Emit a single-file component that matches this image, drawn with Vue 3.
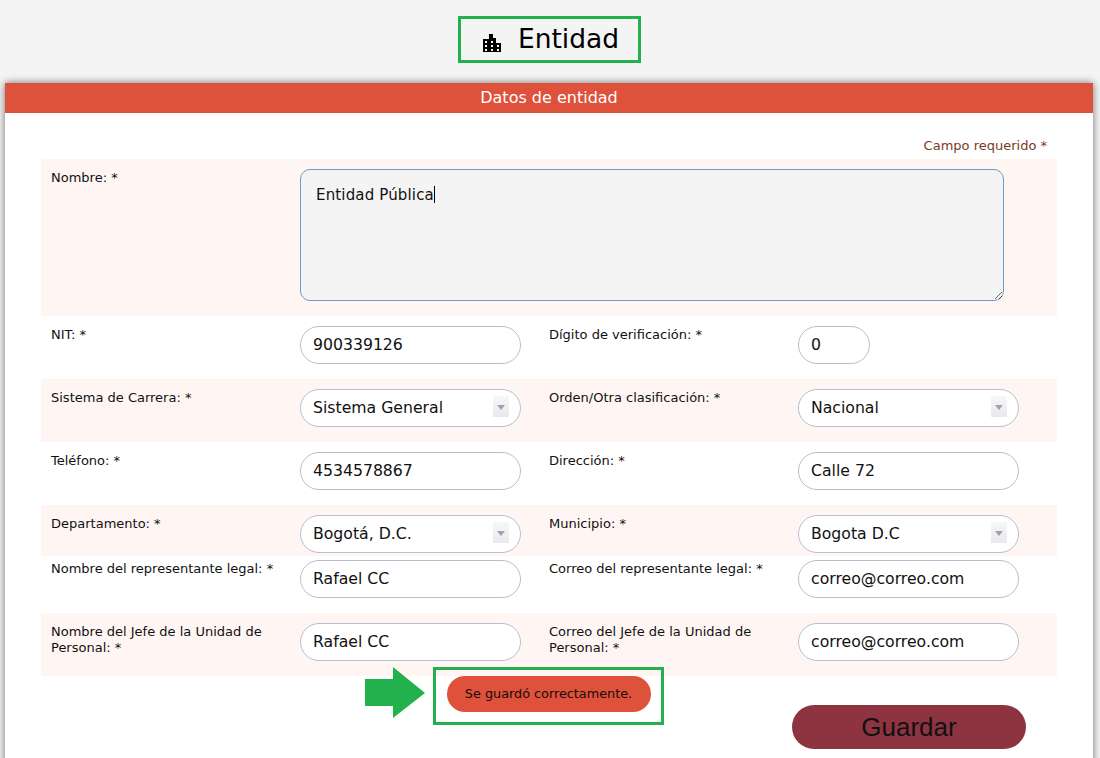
<script setup>
const formRows = [
  { cls: 'pink', left: { label: 'Sistema de Carrera: *', value: 'Sistema General', select: true }, right: { label: 'Orden/Otra clasificación: *', value: 'Nacional', select: true } },
  { cls: '', left: { label: 'Teléfono: *', value: '4534578867' }, right: { label: 'Dirección: *', value: 'Calle 72' } },
  { cls: 'pink short', left: { label: 'Departamento: *', value: 'Bogotá, D.C.', select: true }, right: { label: 'Municipio: *', value: 'Bogota D.C', select: true } },
  { cls: 'tight', left: { label: 'Nombre del representante legal: *', value: 'Rafael CC' }, right: { label: 'Correo del representante legal: *', value: 'correo@correo.com' } },
  { cls: 'pink', left: { label: 'Nombre del Jefe de la Unidad de Personal: *', value: 'Rafael CC' }, right: { label: 'Correo del Jefe de la Unidad de Personal: *', value: 'correo@correo.com' } }
]
</script>

<template>
  <div class="page">
    <header class="top">
      <h1 class="title">
        <svg class="icon" viewBox="0 0 18 18" width="18" height="18" shape-rendering="crispEdges">
          <path fill="#000" fill-rule="evenodd" d="M6 0h4v4h3v5h5v9H0V5h6zM2 7v2h2V7zM8 7v2h2V7zM2 11v2h2v-2zM8 11v2h2v-2zM14 11v2h2v-2zM2 15v2h2v-2zM8 15v2h2v-2zM14 15v2h2v-2z"/>
        </svg>
        <span>Entidad</span>
      </h1>
    </header>

    <section class="card">
      <div class="card-head">Datos de entidad</div>
      <div class="card-body">
        <p class="required">Campo requerido *</p>

        <div class="row pink name-row">
          <label class="label">Nombre: *</label>
          <div class="area-wrap">
            <textarea class="area">Entidad Pública</textarea>
            <span class="caret"></span>
          </div>
        </div>

        <div class="row">
          <label class="label">NIT: *</label>
          <input class="field" value="900339126" />
          <label class="label">Dígito de verificación: *</label>
          <input class="field tiny" value="0" />
        </div>

        <div v-for="row in formRows" :key="row.left.label" class="row" :class="row.cls">
          <template v-for="f in [row.left, row.right]" :key="f.label">
            <label class="label">{{ f.label }}</label>
            <div v-if="f.select" class="select-wrap">
              <input class="field" :value="f.value" />
              <span class="arrow"></span>
            </div>
            <input v-else class="field" :value="f.value" />
          </template>
        </div>

        <div class="footer">
          <div class="notice-area">
            <svg class="big-arrow" viewBox="0 0 60 51" width="60" height="51">
              <path fill="#22b14c" d="M0 12h28V0l32 26-32 25V39H0z"/>
            </svg>
            <div class="notice-frame">
              <div class="notice">Se guardó correctamente.</div>
            </div>
          </div>
          <button class="save" type="button">Guardar</button>
        </div>
      </div>
    </section>
  </div>
</template>

<style>
html, body { margin: 0; overflow: hidden; background: #f4f4f4; }
</style>

<style scoped>
.page {
  height: 758px;
  overflow: hidden;
  background: #f4f4f4;
  font-family: "DejaVu Sans", Verdana, sans-serif;
  color: #000;
}
.top { display: flex; justify-content: center; padding-top: 16px; height: 83px; box-sizing: border-box; }
.title {
  margin: 0 0 0 -2px;
  width: 183px;
  height: 47px;
  box-sizing: border-box;
  border: 3px solid #22b14c;
  padding-left: 4px;
  display: flex;
  align-items: center;
  justify-content: center;
  gap: 17px;
  font-size: 26.500px;
  line-height: 38px;
  font-weight: 400;
}
.title span { margin-top: -2px; }
.icon { margin-top: 6px; }
.card {
  margin: 0 7px 0 5px;
  background: #fff;
  box-shadow: 0 0 8px rgba(0, 0, 0, .55);
  height: 700px;
}
.card-head {
  height: 30px;
  line-height: 30px;
  background: #de513b;
  color: #fff;
  text-align: center;
  font-size: 16px;
}
.card-body { padding: 0 36px; }
.required {
  margin: 0;
  height: 46px;
  box-sizing: border-box;
  padding: 25px 10px 0 0;
  text-align: right;
  font-size: 13px;
  line-height: 16px;
  color: #7b3a22;
}
.row {
  display: grid;
  grid-template-columns: repeat(4, 249px);
  padding: 10px 10px 15px;
  align-items: start;
}
.pink { background: #fff6f4; }
.short { padding-bottom: 3px; }
.tight { padding-top: 4px; }
.name-row { grid-template-columns: 249px 1fr; }
.label {
  font-size: 13px;
  line-height: 16px;
  padding: 1px 12px 0 0;
  color: #111;
}
.area-wrap { position: relative; width: 704px; height: 132px; }
.area {
  display: block;
  width: 704px;
  height: 132px;
  box-sizing: border-box;
  border: 1px solid #6b9ac4;
  border-radius: 10px;
  background: #f4f4f4;
  padding: 16px 15px;
  font: 15px/18px "DejaVu Sans", Verdana, sans-serif;
  letter-spacing: .15px;
  color: #111;
  outline: none;
}
.caret {
  position: absolute;
  left: 134px;
  top: 17px;
  width: 1px;
  height: 17px;
  background: #000;
}
.field {
  display: block;
  width: 221px;
  height: 38px;
  box-sizing: border-box;
  border: 1px solid #b9bfd0;
  border-radius: 19px;
  background: #fff;
  padding: 0 12px 2px;
  font: 15.700px "DejaVu Sans", Verdana, sans-serif;
  color: #111;
  outline: none;
}
.tiny { width: 72px; }
.select-wrap { position: relative; width: 221px; }
.arrow {
  position: absolute;
  right: 12px;
  top: 7px;
  width: 16px;
  height: 21px;
  background: linear-gradient(#f7f7f8, #e9e9ec);
}
.arrow::after {
  content: "";
  position: absolute;
  left: 4px;
  top: 9px;
  border: 4px solid transparent;
  border-top: 5px solid #9aa3b8;
  border-bottom: 0;
}
.footer {
  position: relative;
  height: 82px;
  display: flex;
  justify-content: flex-end;
  padding: 29px 31px 0 0;
  box-sizing: border-box;
}
.notice-area {
  position: absolute;
  left: 324px;
  top: -9px;
  display: flex;
  align-items: flex-start;
  gap: 8px;
}
.notice-frame {
  width: 231px;
  height: 58px;
  box-sizing: border-box;
  border: 3px solid #22b14c;
  display: flex;
  align-items: center;
  justify-content: center;
}
.notice {
  width: 204px;
  height: 36px;
  margin-top: -4px;
  border-radius: 18px;
  background: #de513b;
  color: #1a0a08;
  font-size: 12.800px;
  line-height: 36px;
  text-align: center;
}
.save {
  width: 234px;
  height: 44px;
  border: 0;
  border-radius: 22px;
  background: #8e3340;
  color: #111;
  font: 26px "Liberation Sans", Arial, sans-serif;
  padding: 0;
}
</style>
